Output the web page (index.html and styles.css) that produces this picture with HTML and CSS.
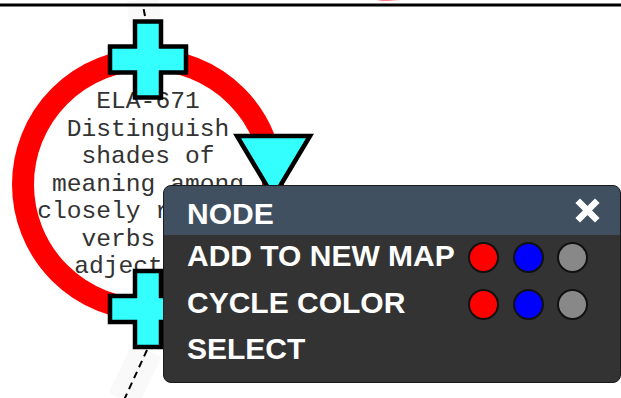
FILE: index.html
```html
<!DOCTYPE html>
<html>
<head>
    <meta charset="utf-8">
    <link rel="stylesheet" href="styles.css">
</head>
<body>
    <div class="stage">
        <svg class="graph" width="621" height="398" viewBox="0 0 621 398">
            <!-- faint edge halos -->
            <line x1="146" y1="30" x2="143" y2="0" class="halo"/>
            <line x1="147" y1="350" x2="123" y2="400" class="halo"/>

            <!-- neighbour node, mostly off screen -->
            <circle cx="388" cy="-135.5" r="125" class="ring"/>
            <line x1="0" y1="5" x2="621" y2="5" class="frame"/>

            <!-- edges -->
            <line x1="145" y1="16" x2="143" y2="6" class="edge"/>
            <line x1="147" y1="350" x2="124" y2="400" class="edge"/>

            <!-- node -->
            <circle cx="148" cy="184.5" r="125" class="ring"/>
            <text class="label" x="148" y="108">ELA-671</text>
            <text class="label" x="148" y="135.5">Distinguish</text>
            <text class="label" x="148" y="163">shades of</text>
            <text class="label" x="148" y="190.5">meaning among</text>
            <text class="label" x="148" y="218">closely related</text>
            <text class="label" x="148" y="245.5">verbs and</text>
            <text class="label" x="148" y="273">adjectives</text>

            <!-- handles -->
            <path class="handle" d="M135 21.5 H161 V46.5 H186 V72.5 H161 V97.5 H135 V72.5 H110 V46.5 H135 Z"/>
            <path class="handle" d="M135 271 H161 V296 H186 V322 H161 V347 H135 V322 H110 V296 H135 Z"/>
            <path class="handle" d="M237 136 H310 L273.5 197 Z"/>
        </svg>

        <div class="menu">
            <div class="menu-head">
                <span>NODE</span>
                <svg class="close" width="25" height="25" viewBox="0 0 25 25">
                    <path d="M5 5 L20 20 M20 5 L5 20"/>
                </svg>
            </div>
            <div class="menu-body">
                <div class="menu-row">
                    <span>ADD TO NEW MAP</span>
                    <div class="swatches">
                        <span class="swatch red"></span>
                        <span class="swatch blue"></span>
                        <span class="swatch grey"></span>
                    </div>
                </div>
                <div class="menu-row">
                    <span>CYCLE COLOR</span>
                    <div class="swatches">
                        <span class="swatch red"></span>
                        <span class="swatch blue"></span>
                        <span class="swatch grey"></span>
                    </div>
                </div>
                <div class="menu-row">
                    <span>SELECT</span>
                </div>
            </div>
        </div>
    </div>
</body>
</html>
```

FILE: styles.css
```css
body {
    margin: 0;
    background-color: #FFFFFF;
    font-family: "Liberation Sans", Arial, sans-serif;
}

.stage {
    position: relative;
    width: 621px;
    height: 398px;
    overflow: hidden;
}

.graph {
    display: block;
}

.halo {
    stroke: #F9F9F9;
    stroke-width: 32;
}

.frame {
    stroke: #000000;
    stroke-width: 3;
}

.edge {
    stroke: #000000;
    stroke-width: 2;
    stroke-dasharray: 7 5;
}

.ring {
    fill: none;
    stroke: #FF0000;
    stroke-width: 22;
}

.label {
    font-family: "Liberation Mono", "Courier New", monospace;
    font-size: 24.6px;
    fill: #333333;
    text-anchor: middle;
}

.handle {
    fill: #33FFFF;
    stroke: #000000;
    stroke-width: 4.5;
}

.menu {
    position: absolute;
    left: 163px;
    top: 185px;
    width: 458px;
    height: 198px;
    box-sizing: border-box;
    border: 1px solid #1A1A1A;
    border-radius: 8px;
    overflow: hidden;
    background-color: #333333;
    color: #FFFFFF;
    font-size: 30px;
    font-weight: bold;
    line-height: 30px;
}

.menu-head {
    display: flex;
    justify-content: space-between;
    align-items: flex-start;
    box-sizing: border-box;
    height: 49px;
    padding: 13px 20px 0 23px;
    background-color: #405060;
}

.close {
    margin-top: -1px;
}

.close path {
    stroke: #FFFFFF;
    stroke-width: 6.5;
    stroke-linecap: square;
}

.menu-body {
    display: flex;
    flex-direction: column;
    gap: 16.5px;
    padding: 6px 32px 0 23px;
}

.menu-row {
    display: flex;
    justify-content: space-between;
    align-items: center;
    height: 30px;
}

.swatches {
    display: flex;
    gap: 13.5px;
    margin-top: 3px;
}

.swatch {
    width: 31px;
    height: 31px;
    box-sizing: border-box;
    border: 2px solid #111111;
    border-radius: 50%;
}

.red {
    background-color: #FF0000;
}

.blue {
    background-color: #0000FF;
}

.grey {
    background-color: #888888;
}
```
